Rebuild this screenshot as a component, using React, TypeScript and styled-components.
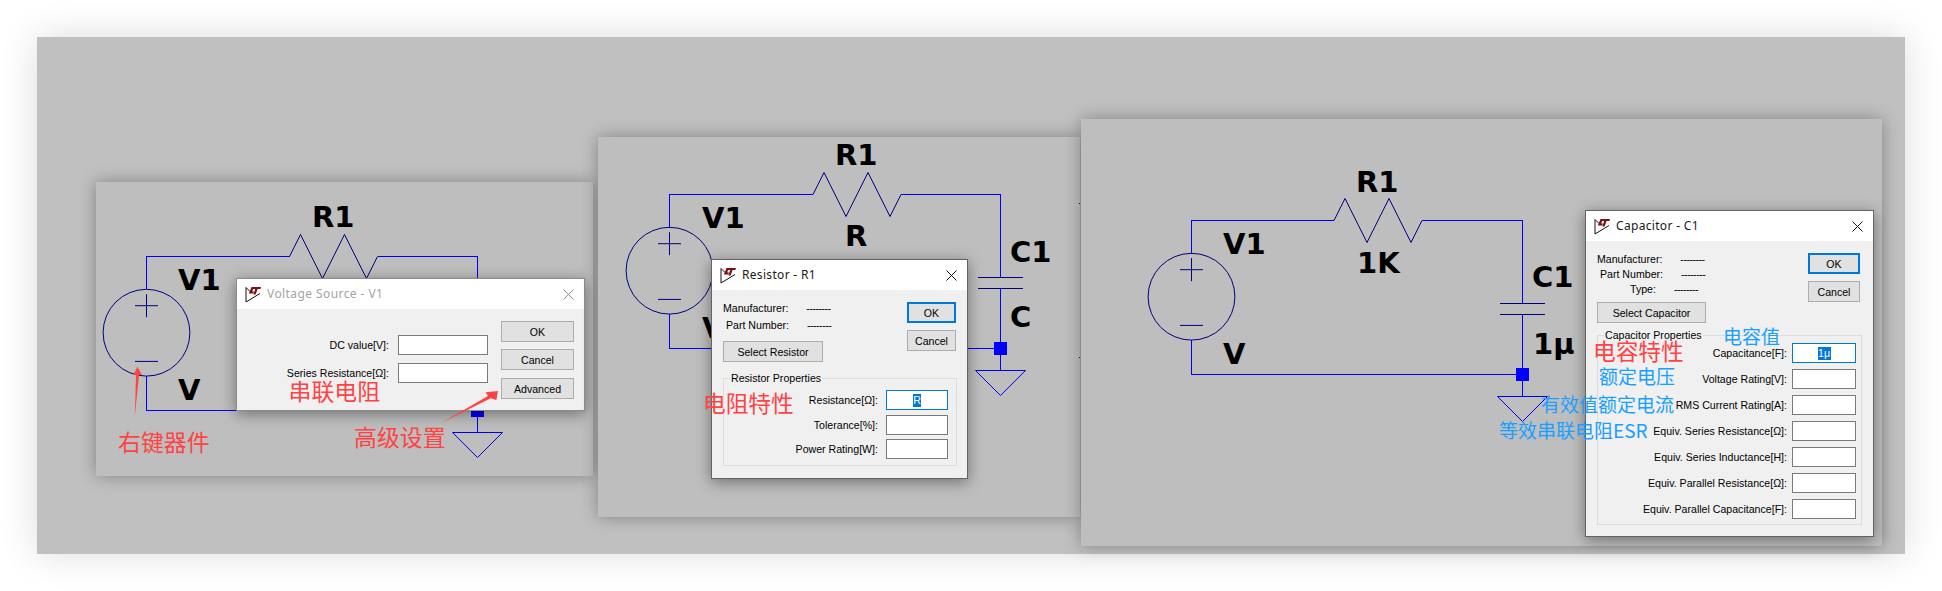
import React from "react";
import styled, { createGlobalStyle } from "styled-components";

const Global = createGlobalStyle`
  html, body { margin: 0; padding: 0; background: #fff; }
  body { width: 1942px; height: 591px; overflow: hidden; font-family: "Liberation Sans", Arial, sans-serif; }
`;

const Canvas = styled.div`
  position: relative;
  margin: 37px 0 0 37px;
  width: 1868px;
  height: 517px;
  background: #c0c0c0;
  box-shadow: 0 0 36px rgba(0, 0, 0, 0.14);
`;

const Panel = styled.section<{ $x: number; $y: number; $w: number; $h: number }>`
  position: absolute;
  left: ${(p) => p.$x}px;
  top: ${(p) => p.$y}px;
  width: ${(p) => p.$w}px;
  height: ${(p) => p.$h}px;
  background: #bebebe;
  box-shadow: 0 0 16px rgba(0, 0, 0, 0.32);
`;

const Sheet = styled.svg`
  display: block;
  width: 100%;
  height: 100%;
`;

const Overlay = styled.svg`
  position: absolute;
  inset: 0;
  width: 100%;
  height: 100%;
  pointer-events: none;
`;

const Wire = styled.path`
  fill: none;
  stroke: #0000ff;
  stroke-width: 1;
  shape-rendering: crispEdges;
`;

const Part = styled.path`
  fill: none;
  stroke: #000080;
  stroke-width: 1;
`;

const GroundMark = styled.path`
  fill: none;
  stroke: #0000e0;
  stroke-width: 1;
`;

const Node = styled.rect`
  fill: #0000ff;
`;

const Ring = styled.circle`
  fill: none;
  stroke: #000080;
  stroke-width: 1;
`;

const Label = styled.text`
  font-family: "DejaVu Sans", sans-serif;
  font-weight: 700;
  font-size: 29px;
  fill: #000;
`;

const Pointer = styled.polygon`
  fill: #ff4344;
`;

const Dialog = styled.div<{ $x: number; $y: number; $w: number; $h: number; $inactive?: boolean }>`
  position: absolute;
  left: ${(p) => p.$x}px;
  top: ${(p) => p.$y}px;
  width: ${(p) => p.$w}px;
  height: ${(p) => p.$h}px;
  box-sizing: border-box;
  display: flex;
  flex-direction: column;
  background: #f0f0f0;
  border: 1px solid ${(p) => (p.$inactive ? "#8c8c8c" : "#646464")};
  box-shadow: 0 3px 14px rgba(0, 0, 0, 0.42);
  font-size: 10.6px;
  color: #000;
`;

const TitleBar = styled.header`
  flex: 0 0 30px;
  display: flex;
  align-items: center;
  gap: 6px;
  padding: 0 10px 0 8px;
  background: #fff;
`;

const TitleText = styled.span<{ $inactive?: boolean }>`
  font-family: "Noto Sans", sans-serif;
  font-size: 12px;
  padding-bottom: 2px;
  letter-spacing: ${(p) => (p.$inactive ? "0.42px" : "0.32px")};
  color: ${(p) => (p.$inactive ? "#a3a3a3" : "#1a1a1a")};
`;

const CloseGlyph = styled.svg`
  margin-left: auto;
  width: 11px;
  height: 11px;
`;

const Stack = styled.div<{ $gap?: number; $top?: number; $right?: number }>`
  display: flex;
  flex-direction: column;
  gap: ${(p) => p.$gap ?? 0}px;
  margin-top: ${(p) => p.$top ?? 0}px;
  margin-right: ${(p) => p.$right ?? 0}px;
`;

const Body = styled.div<{ $pad: string }>`
  flex: 1;
  display: flex;
  flex-direction: column;
  padding: ${(p) => p.$pad};
`;

const Split = styled.div<{ $gap?: number }>`
  display: flex;
  justify-content: ${(p) => (p.$gap ? "flex-end" : "space-between")};
  gap: ${(p) => p.$gap ?? 0}px;
  align-items: flex-start;
`;

const InfoRow = styled.div<{ $indent?: number; $h: number }>`
  display: flex;
  align-items: center;
  gap: 18px;
  height: ${(p) => p.$h}px;
  padding-left: ${(p) => p.$indent ?? 0}px;
  white-space: nowrap;
`;

const Dashes = styled.span`
  letter-spacing: -0.5px;
`;

const Button = styled.div<{ $w: number; $primary?: boolean; $top?: number }>`
  box-sizing: border-box;
  width: ${(p) => p.$w}px;
  height: 21px;
  margin-top: ${(p) => p.$top ?? 0}px;
  display: flex;
  align-items: center;
  justify-content: center;
  background: #e1e1e1;
  border: ${(p) => (p.$primary ? "2px solid #0078d7" : "1px solid #adadad")};
  white-space: nowrap;
`;

const GroupBox = styled.div<{ $top: number; $pad: string; $gap: number }>`
  position: relative;
  box-sizing: border-box;
  margin-top: ${(p) => p.$top}px;
  padding: ${(p) => p.$pad};
  display: flex;
  flex-direction: column;
  gap: ${(p) => p.$gap}px;
  border: 1px solid #dcdcdc;
`;

const Legend = styled.span`
  position: absolute;
  left: 6px;
  top: -7px;
  padding: 0 1px;
  background: #f0f0f0;
  line-height: 13px;
  white-space: nowrap;
`;

const FieldRow = styled.div<{ $gap: number }>`
  display: flex;
  align-items: center;
  justify-content: flex-end;
  gap: ${(p) => p.$gap}px;
  white-space: nowrap;
`;

const Field = styled.div<{ $w: number; $focus?: boolean }>`
  box-sizing: border-box;
  width: ${(p) => p.$w}px;
  height: 20px;
  display: flex;
  align-items: center;
  justify-content: center;
  background: #fff;
  border: 1px solid ${(p) => (p.$focus ? "#0078d7" : "#7a7a7a")};
`;

const Selected = styled.span`
  background: #0078d7;
  color: #fff;
  line-height: 13px;
  padding: 0 0.5px;
`;

const Note = styled.span<{ $x: number; $y: number; $size: number; $tone: "red" | "blue" }>`
  position: absolute;
  left: ${(p) => p.$x}px;
  top: ${(p) => p.$y}px;
  font-family: "Noto Sans CJK SC", "Noto Sans", sans-serif;
  font-size: ${(p) => p.$size}px;
  line-height: 1;
  white-space: nowrap;
  color: ${(p) => (p.$tone === "red" ? "#ff4344" : "#1a9fff")};
`;

const Logo = () => (
  <svg width="16" height="17" viewBox="0 0 16 17">
    <path d="M1 1.5 V16 L15 7.5 M1 1.5 L5 5.5" fill="none" stroke="#111" strokeWidth="1" />
    <path d="M6.5 1 H16 L15.4 3 H12.6 L10.6 8.5 H8.4 L10.2 3 H8 L7.3 5.6 H9 L8.3 7.4 H3.8 Z" fill="#7c1014" />
  </svg>
);

const Close = ({ dim }: { dim?: boolean }) => (
  <CloseGlyph viewBox="0 0 11 11">
    <path d="M0.5 0.5 L10.5 10.5 M10.5 0.5 L0.5 10.5" stroke={dim ? "#909090" : "#111"} strokeWidth="1" fill="none" />
  </CloseGlyph>
);

const Source = ({ x, y }: { x: number; y: number }) => (
  <>
    <Ring cx={x} cy={y} r={43.4} />
    <Part d={`M${x - 11.5} ${y - 27} H${x + 11.5} M${x} ${y - 38.5} V${y - 15.5} M${x - 11.5} ${y + 28.7} H${x + 11.5}`} />
  </>
);

const Resistor = ({ x, y }: { x: number; y: number }) => (
  <Part d={`M${x} ${y} L${x + 11} ${y - 22} L${x + 33} ${y + 22} L${x + 55} ${y - 22} L${x + 77} ${y + 22} L${x + 88} ${y}`} />
);

const Capacitor = ({ x, y }: { x: number; y: number }) => (
  <Part d={`M${x - 22.5} ${y} H${x + 22.5} M${x - 22.5} ${y + 11} H${x + 22.5}`} />
);

const Ground = ({ x, y }: { x: number; y: number }) => (
  <GroundMark d={`M${x - 25} ${y} H${x + 25} L${x} ${y + 25} Z`} />
);

const Junction = ({ x, y }: { x: number; y: number }) => <Node x={x - 6.5} y={y - 6.5} width={13} height={13} />;

export default function App() {
  return (
    <>
      <Global />
      <Canvas>
        <Panel $x={59} $y={145} $w={497} $h={294}>
          <Sheet viewBox="96 182 497 294">
            <Wire d="M146.5 289 V256.5 H289.5 M378 256.5 H477.5 V290 M146.5 376 V410.5 H477.5 V432" />
            <Source x={146.5} y={332.7} />
            <Resistor x={289.5} y={256.5} />
            <Junction x={477.5} y={410.5} />
            <Ground x={477.5} y={432.5} />
            <Label x={312} y={227}>R1</Label>
            <Label x={178} y={290}>V1</Label>
            <Label x={178} y={400}>V</Label>
          </Sheet>
          <Dialog $x={140} $y={96} $w={349} $h={133} $inactive>
            <TitleBar>
              <Logo />
              <TitleText $inactive>Voltage Source - V1</TitleText>
              <Close dim />
            </TitleBar>
            <Body $pad="12px 10px 0 0">
              <Split $gap={13}>
                <Stack $gap={8} $top={14}>
                  <FieldRow $gap={9}>DC value[V]:<Field $w={90} /></FieldRow>
                  <FieldRow $gap={9}>Series Resistance[Ω]:<Field $w={90} /></FieldRow>
                </Stack>
                <Stack $gap={7}>
                  <Button $w={73}>OK</Button>
                  <Button $w={73}>Cancel</Button>
                  <Button $w={73} $top={1}>Advanced</Button>
                </Stack>
              </Split>
            </Body>
          </Dialog>
          <Overlay viewBox="96 182 497 294">
            <Pointer points="134.8,416.7 136,375 133.2,375 137.5,366.7 142,375 139,375" />
            <Pointer points="440.7,423.3 488,396 485.6,392.3 498,391 496.4,400 490.7,398.3" />
          </Overlay>
          <Note $x={22} $y={248} $size={22.9} $tone="red">右键器件</Note>
          <Note $x={192.5} $y={197} $size={22.9} $tone="red">串联电阻</Note>
          <Note $x={258} $y={243} $size={22.9} $tone="red">高级设置</Note>
        </Panel>

        <Panel $x={561} $y={100} $w={482} $h={380}>
          <Sheet viewBox="598 137 482 380">
            <Wire d="M669.5 228 V194.5 H813 M901 194.5 H1000.5 V277 M1000.5 289 V370 M669.5 314 V348.5 H1000.5 M1079 203.5 H1080 M1079 357.5 H1080" />
            <Source x={669.5} y={270.7} />
            <Resistor x={813} y={194.5} />
            <Capacitor x={1000.5} y={277.5} />
            <Junction x={1000.5} y={348.5} />
            <Ground x={1000.5} y={370.5} />
            <Label x={835} y={165}>R1</Label>
            <Label x={845} y={246}>R</Label>
            <Label x={702} y={228}>V1</Label>
            <Label x={702} y={338}>V</Label>
            <Label x={1010} y={262}>C1</Label>
            <Label x={1010} y={327}>C</Label>
          </Sheet>
          <Dialog $x={113} $y={122} $w={257} $h={220}>
            <TitleBar>
              <Logo />
              <TitleText>Resistor - R1</TitleText>
              <Close />
            </TitleBar>
            <Body $pad="10px 10px 0 11px">
              <Split>
                <Stack>
                  <Stack $gap={2}>
                    <InfoRow $h={15}>Manufacturer:<Dashes>--------</Dashes></InfoRow>
                    <InfoRow $h={15} $indent={3}>Part Number:<Dashes>--------</Dashes></InfoRow>
                  </Stack>
                  <Button $w={100} $top={9}>Select Resistor</Button>
                </Stack>
                <Stack $gap={7} $top={2} $right={1}>
                  <Button $w={49} $primary>OK</Button>
                  <Button $w={49}>Cancel</Button>
                </Stack>
              </Split>
              <GroupBox $top={16} $pad="11px 8px 6px 0" $gap={4.5}>
                <Legend>Resistor Properties</Legend>
                <FieldRow $gap={8}>Resistance[Ω]:<Field $w={62} $focus><Selected>R</Selected></Field></FieldRow>
                <FieldRow $gap={8}>Tolerance[%]:<Field $w={62} /></FieldRow>
                <FieldRow $gap={8}>Power Rating[W]:<Field $w={62} /></FieldRow>
              </GroupBox>
            </Body>
          </Dialog>
          <Note $x={105} $y={255} $size={22.7} $tone="red">电阻特性</Note>
        </Panel>

        <Panel $x={1044} $y={82} $w={801} $h={427}>
          <Sheet viewBox="1081 119 801 427">
            <Wire d="M1191.5 254 V220.5 H1334 M1422 220.5 H1522.5 V303 M1522.5 315 V396 M1191.5 340 V374.5 H1522.5" />
            <Source x={1191.5} y={296.7} />
            <Resistor x={1334} y={220.5} />
            <Capacitor x={1522.5} y={303.5} />
            <Junction x={1522.5} y={374.5} />
            <Ground x={1522.5} y={396.5} />
            <Label x={1356} y={192}>R1</Label>
            <Label x={1357} y={273}>1K</Label>
            <Label x={1223} y={254}>V1</Label>
            <Label x={1223} y={364}>V</Label>
            <Label x={1532} y={287}>C1</Label>
            <Label x={1533} y={354}>1μ</Label>
          </Sheet>
          <Dialog $x={504} $y={91} $w={289} $h={327}>
            <TitleBar>
              <Logo />
              <TitleText>Capacitor - C1</TitleText>
              <Close />
            </TitleBar>
            <Body $pad="10px 11px 0 11px">
              <Split>
                <Stack>
                  <InfoRow $h={15}>Manufacturer:<Dashes>--------</Dashes></InfoRow>
                  <InfoRow $h={15} $indent={3}>Part Number:<Dashes>--------</Dashes></InfoRow>
                  <InfoRow $h={15} $indent={33}>Type:<Dashes>--------</Dashes></InfoRow>
                  <Button $w={109} $top={6}>Select Capacitor</Button>
                </Stack>
                <Stack $gap={7} $top={2} $right={2}>
                  <Button $w={52} $primary>OK</Button>
                  <Button $w={52}>Cancel</Button>
                </Stack>
              </Split>
              <GroupBox $top={12} $pad="7px 5px 5px 0" $gap={6}>
                <Legend>Capacitor Properties</Legend>
                <FieldRow $gap={5}>Capacitance[F]:<Field $w={64} $focus><Selected>1μ</Selected></Field></FieldRow>
                <FieldRow $gap={5}>Voltage Rating[V]:<Field $w={64} /></FieldRow>
                <FieldRow $gap={5}>RMS Current Rating[A]:<Field $w={64} /></FieldRow>
                <FieldRow $gap={5}>Equiv. Series Resistance[Ω]:<Field $w={64} /></FieldRow>
                <FieldRow $gap={5}>Equiv. Series Inductance[H]:<Field $w={64} /></FieldRow>
                <FieldRow $gap={5}>Equiv. Parallel Resistance[Ω]:<Field $w={64} /></FieldRow>
                <FieldRow $gap={5}>Equiv. Parallel Capacitance[F]:<Field $w={64} /></FieldRow>
              </GroupBox>
            </Body>
          </Dialog>
          <Note $x={642} $y={207} $size={19} $tone="blue">电容值</Note>
          <Note $x={512} $y={221} $size={22.7} $tone="red">电容特性</Note>
          <Note $x={518} $y={247} $size={19} $tone="blue">额定电压</Note>
          <Note $x={460} $y={275} $size={19} $tone="blue">有效值额定电流</Note>
          <Note $x={418} $y={301} $size={19} $tone="blue">等效串联电阻ESR</Note>
        </Panel>
      </Canvas>
    </>
  );
}
